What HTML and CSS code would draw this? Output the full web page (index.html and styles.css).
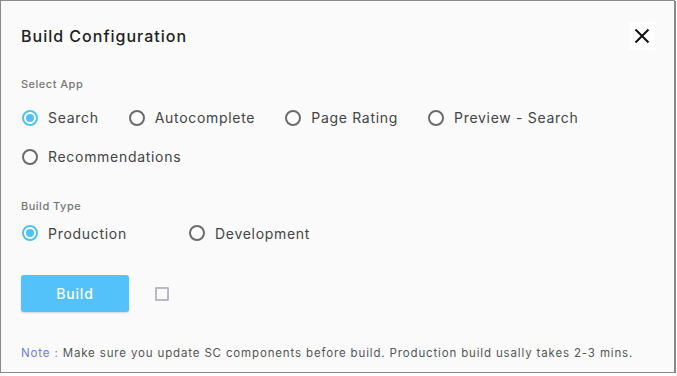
FILE: index.html
```html
<!DOCTYPE html>
<html lang="en">
<head>
    <meta charset="UTF-8">
    <meta name="viewport" content="width=device-width, initial-scale=1.0">
    <title>Build Configuration</title>
    <link rel="stylesheet" href="styles.css">
</head>
<body>
    <div class="dialog">
        <div class="dialog-header">
            <h1>Build Configuration</h1>
            <button type="button" class="close-btn" aria-label="Close">
                <svg width="16" height="16" viewBox="0 0 16 16">
                    <path d="M1.5 1.5 L14.5 14.5 M14.5 1.5 L1.5 14.5" stroke="#111" stroke-width="2" fill="none"/>
                </svg>
            </button>
        </div>

        <div class="section">
            <div class="section-label">Select App</div>
            <div class="radio-group">
                <label class="radio checked"><span class="dot"></span>Search</label>
                <label class="radio"><span class="dot"></span>Autocomplete</label>
                <label class="radio"><span class="dot"></span>Page Rating</label>
                <label class="radio"><span class="dot"></span>Preview - Search</label>
                <label class="radio"><span class="dot"></span>Recommendations</label>
            </div>
        </div>

        <div class="section section-type">
            <div class="section-label">Build Type</div>
            <div class="radio-group type-group">
                <label class="radio checked"><span class="dot"></span>Production</label>
                <label class="radio"><span class="dot"></span>Development</label>
            </div>
        </div>

        <div class="actions">
            <button type="button" class="build-btn">Build</button>
            <span class="checkbox"></span>
        </div>

        <p class="note"><span class="note-label">Note :</span> Make sure you update SC components before build. Production build usally takes 2-3 mins.</p>
    </div>
</body>
</html>
```

FILE: styles.css
```css
body {
    margin: 0;
    padding: 0;
    background-color: #fff;
    font-family: Inter, "Open Sans", sans-serif;
    color: #333;
}
.dialog {
    width: 675px;
    height: 373px;
    box-sizing: border-box;
    background-color: #fafafa;
    border: 1px solid #8a8a8a;
    box-shadow: 1px 1px 0 #8a8a8a;
    padding: 0 20px;
}
.dialog-header {
    display: flex;
    justify-content: space-between;
    align-items: center;
    height: 69px;
}
h1 {
    margin: 0;
    font-size: 16px;
    font-weight: 500;
    color: #222;
    letter-spacing: 1px;
}
.close-btn {
    width: 26px;
    height: 28px;
    margin-right: -1px;
    border: none;
    background-color: #fff;
    padding: 0;
    display: flex;
    align-items: center;
    justify-content: center;
    cursor: pointer;
}
.section {
    margin-top: 6px;
}
.section-type {
    margin-top: 22px;
}
.section-label {
    font-size: 11px;
    font-weight: 500;
    color: #777;
    height: 16px;
    line-height: 16px;
    letter-spacing: 0.5px;
}
.radio-group {
    display: flex;
    flex-wrap: wrap;
    padding-top: 6px;
}
.radio {
    display: flex;
    align-items: center;
    height: 39px;
    margin-right: 29px;
    font-size: 14px;
    color: #444;
    letter-spacing: 0.7px;
    cursor: pointer;
}
.dot {
    width: 12px;
    height: 12px;
    border: 2px solid #6b6b6b;
    border-radius: 50%;
    margin: 0 10px 0 1px;
    box-sizing: content-box;
    position: relative;
    background-color: #fff;
}
.radio.checked .dot {
    border-color: #4fc3f7;
}
.radio.checked .dot::after {
    content: "";
    position: absolute;
    top: 2px;
    left: 2px;
    width: 8px;
    height: 8px;
    border-radius: 50%;
    background-color: #4fc3f7;
}
.type-group {
    padding-top: 3px;
}
.type-group .radio {
    height: 32px;
}
.type-group .radio:first-child {
    width: 138px;
}
.actions {
    display: flex;
    align-items: center;
    margin-top: 26px;
}
.build-btn {
    width: 108px;
    height: 37px;
    border: none;
    border-radius: 3px;
    background-color: #53c2fb;
    box-shadow: 0 1px 2px rgba(0, 0, 0, 0.15);
    color: #fff;
    font-family: inherit;
    font-size: 14px;
    font-weight: 500;
    letter-spacing: 0.8px;
    cursor: pointer;
}
.checkbox {
    width: 10px;
    height: 10px;
    border: 2px solid #b9b9cc;
    border-radius: 1px;
    margin-left: 26px;
}
.note {
    margin: 34px 0 0;
    font-size: 11.5px;
    color: #555;
    letter-spacing: 0.85px;
}
.note-label {
    color: #6b7fe0;
}
```
